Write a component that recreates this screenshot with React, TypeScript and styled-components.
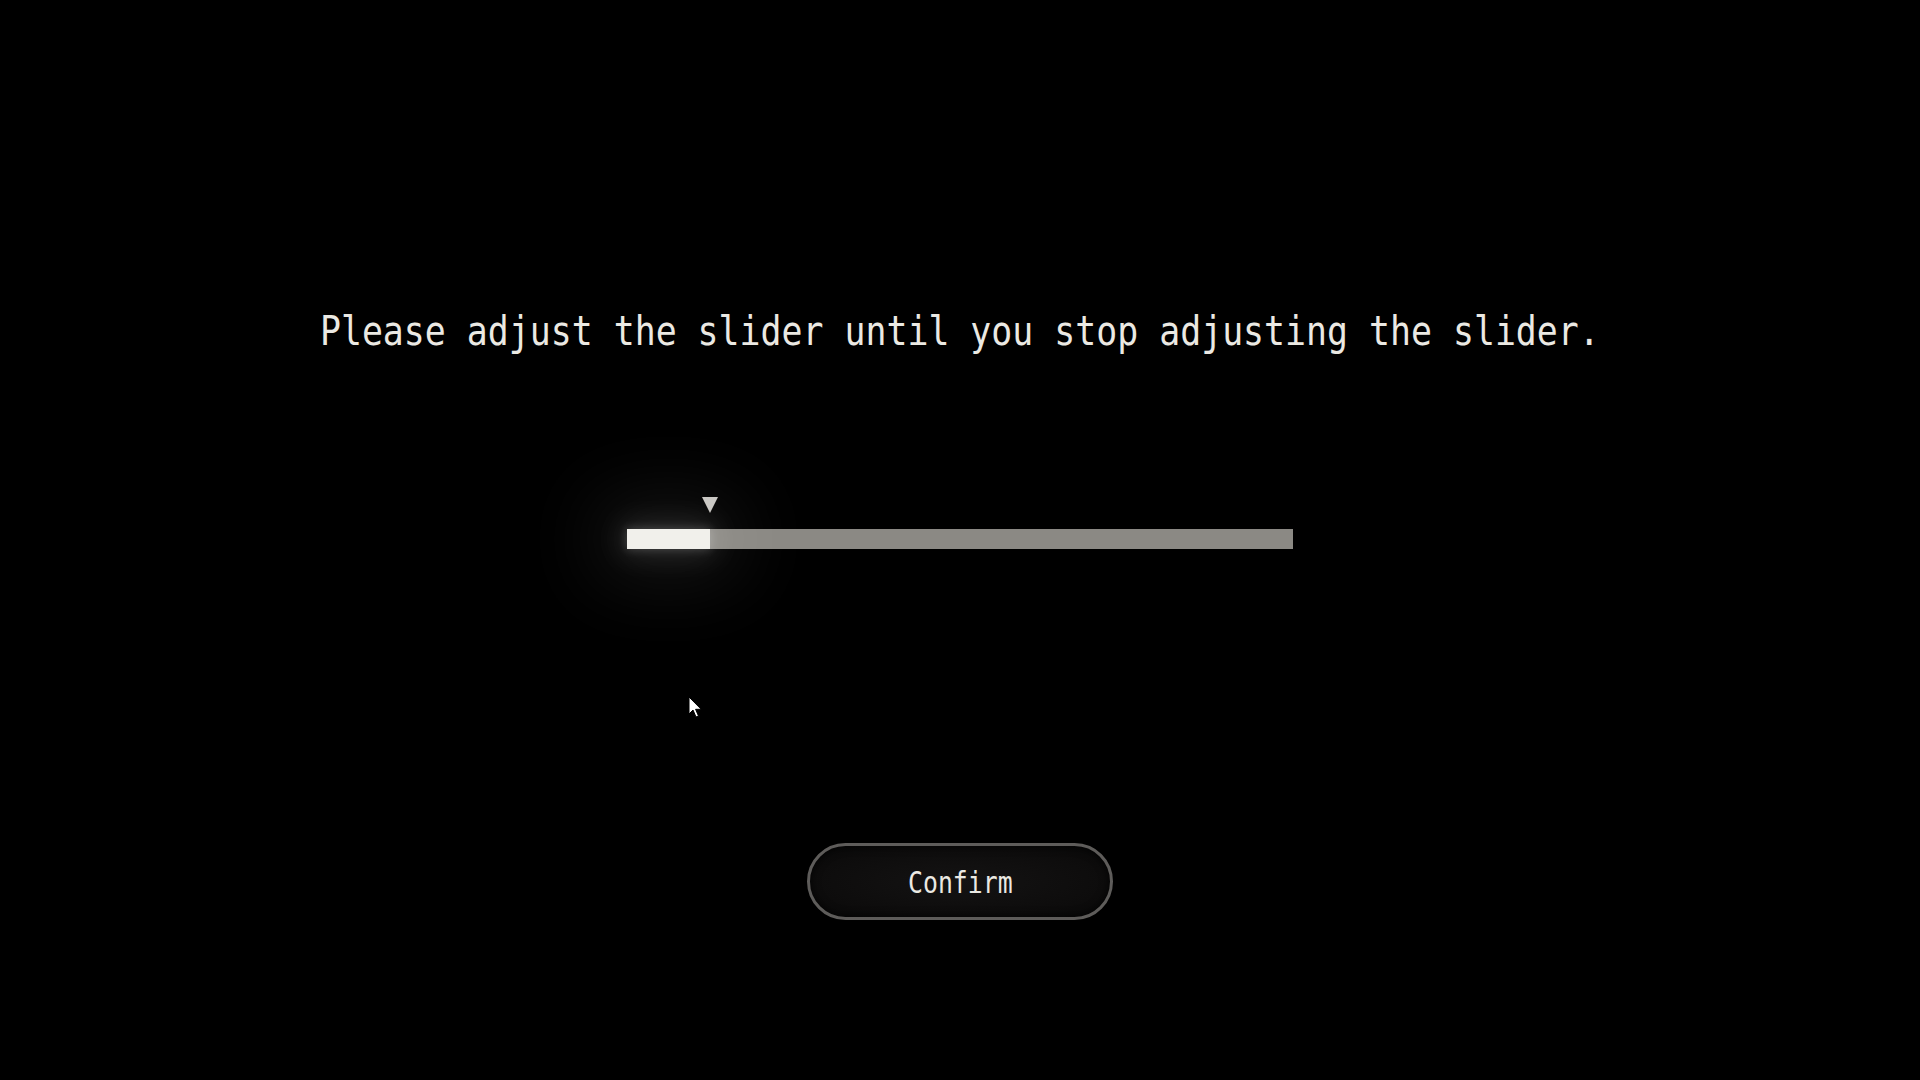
import React, { useState } from "react";
import styled, { createGlobalStyle } from "styled-components";

const GlobalStyle = createGlobalStyle`
  html, body {
    margin: 0;
    padding: 0;
    background: #000;
  }
  * { box-sizing: border-box; }
`;

const MONO = `"DejaVu Sans Mono", "Liberation Mono", monospace`;

const Stage = styled.main`
  position: relative;
  width: 100%;
  min-height: 100vh;
  background: #000;
  display: flex;
  flex-direction: column;
  align-items: center;
  padding-top: 307px;
  overflow: hidden;
`;

const Prompt = styled.p`
  margin: 0;
  font-family: ${MONO};
  font-size: 41px;
  line-height: 48px;
  color: #ebe9e3;
  white-space: nowrap;
  transform: scaleX(0.85);
  transform-origin: center;
`;

const SliderBox = styled.div`
  margin-top: 142px;
  padding-top: 32px;
`;

const Track = styled.div`
  position: relative;
  width: 666px;
  height: 20px;
  background: #8b8984;
`;

const Fill = styled.div`
  height: 100%;
  background: #f1f0eb;
  box-shadow: 0 0 80px 28px rgba(255, 255, 255, 0.09),
    0 0 30px 6px rgba(255, 255, 255, 0.12),
    0 0 10px 1px rgba(255, 255, 255, 0.18);
`;

const Marker = styled.div`
  position: absolute;
  top: -32px;
  width: 0;
  height: 0;
  margin-left: -8px;
  border-left: 8px solid transparent;
  border-right: 8px solid transparent;
  border-top: 16px solid #cac8c4;
`;

const ConfirmButton = styled.button`
  margin-top: 294px;
  width: 306px;
  height: 77px;
  border-radius: 39px;
  border: 3px solid #5e5c5a;
  background: radial-gradient(ellipse at center, #141313 0%, #0d0c0c 70%, #080808 100%);
  box-shadow: inset 0 0 10px rgba(0, 0, 0, 0.8);
  display: flex;
  align-items: center;
  justify-content: center;
  cursor: pointer;
  padding: 0;
`;

const ButtonLabel = styled.span`
  font-family: ${MONO};
  font-size: 31px;
  line-height: 36px;
  color: #ebe9e3;
  transform: scaleX(0.8);
  display: inline-block;
`;

const Pointer = styled.svg`
  position: absolute;
  left: 688px;
  top: 696px;
  width: 16px;
  height: 24px;
  pointer-events: none;
`;

export default function App() {
  const [value] = useState(12.46);

  return (
    <>
      <GlobalStyle />
      <Stage>
        <Prompt>Please adjust the slider until you stop adjusting the slider.</Prompt>
        <SliderBox>
          <Track>
            <Fill style={{ width: `${value}%` }} />
            <Marker style={{ left: `${value}%` }} />
          </Track>
        </SliderBox>
        <ConfirmButton type="button">
          <ButtonLabel>Confirm</ButtonLabel>
        </ConfirmButton>
        <Pointer viewBox="0 0 16 24">
          <path
            d="M1 1 L1 18 L5 14 L8 21 L10.5 20 L7.6 13.3 L13.2 13.3 Z"
            fill="#fff"
            stroke="#000"
            strokeWidth="1"
            strokeLinejoin="round"
          />
        </Pointer>
      </Stage>
    </>
  );
}
